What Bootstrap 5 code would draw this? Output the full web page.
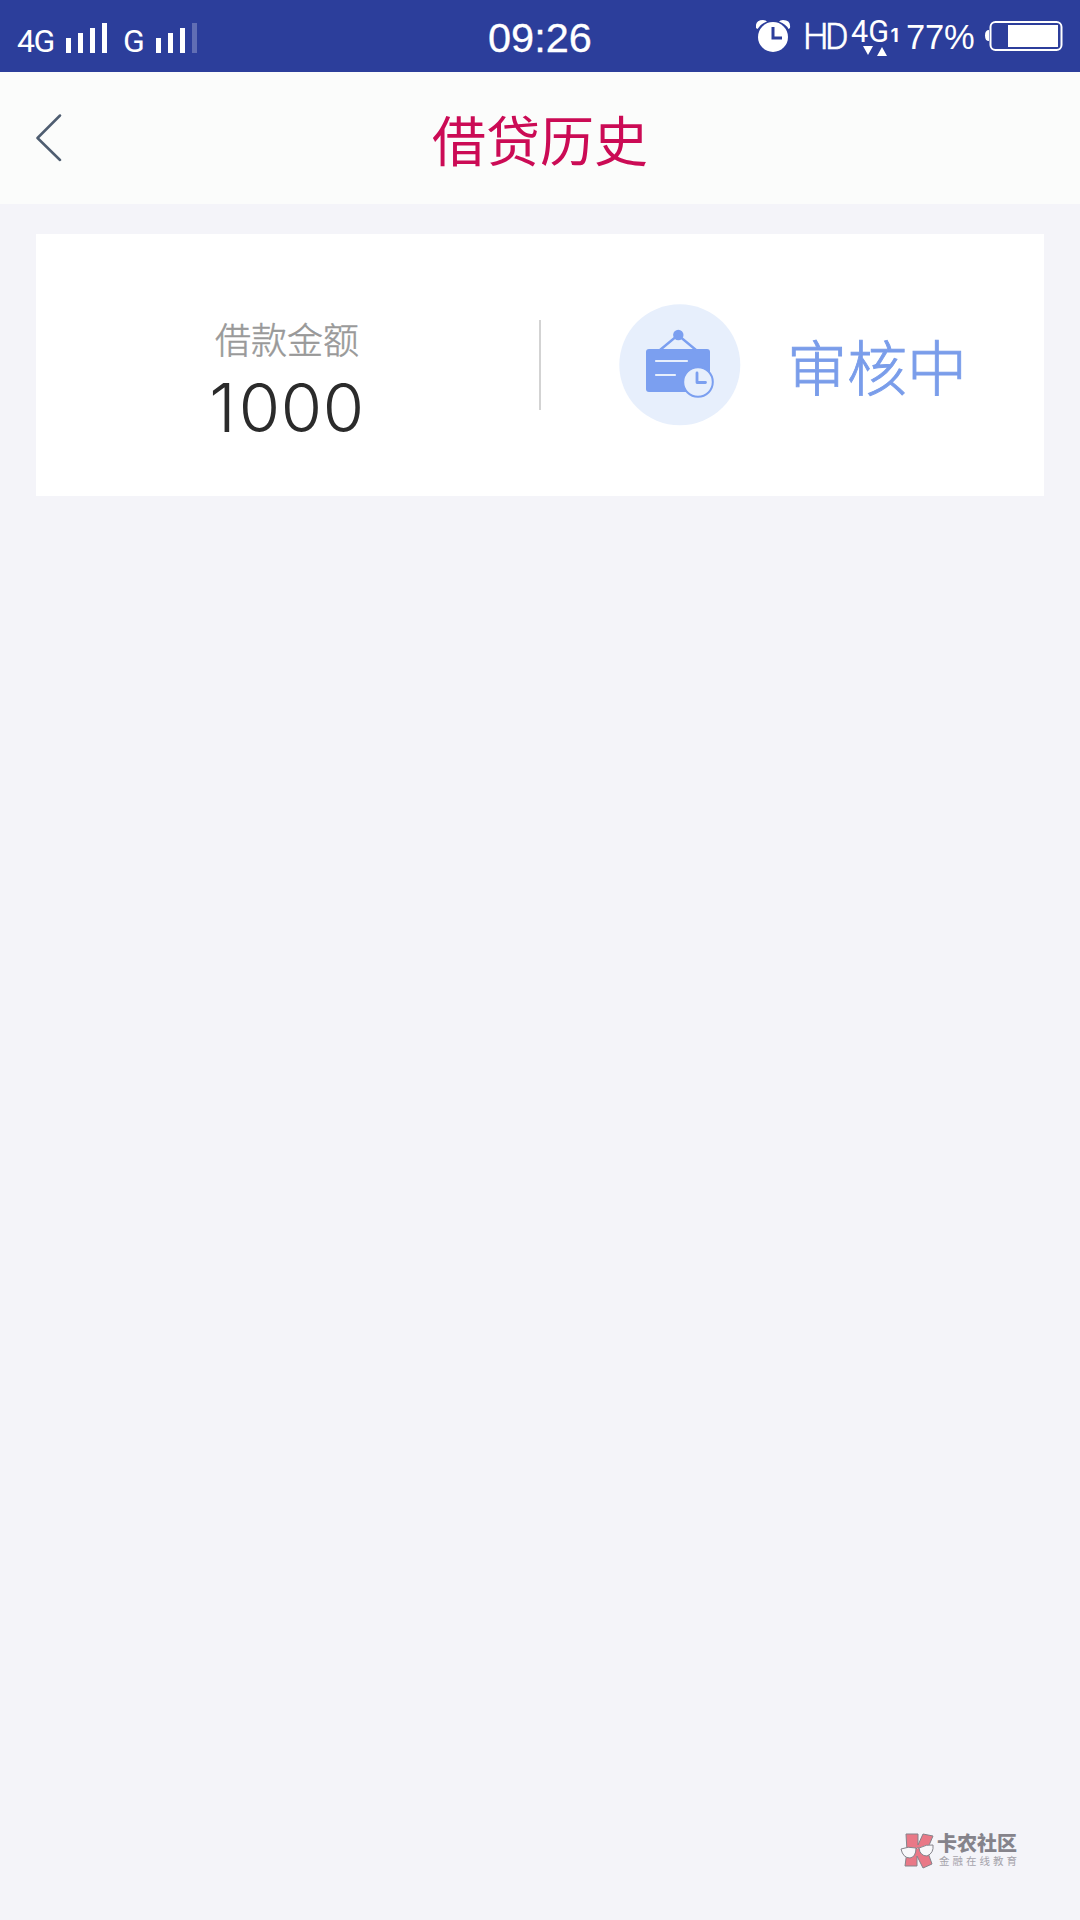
<!DOCTYPE html>
<html lang="zh-CN">
<head>
<meta charset="utf-8">
<meta name="viewport" content="width=device-width, initial-scale=1">
<title>借贷历史</title>
<link href="https://cdn.jsdelivr.net/npm/bootstrap@5.3.0/dist/css/bootstrap.min.css" rel="stylesheet">
<style>
body{background:#f4f4f9;font-family:"Noto Sans CJK SC",sans-serif;min-height:1920px;overflow:hidden}
.status-bar{height:72px;background:#2c3e9b;color:#fff;font-family:Roboto,"Liberation Sans",sans-serif;display:grid;grid-template-columns:488px 1fr 324px;line-height:1}
.status-bar svg{flex:none;display:block}
.net-label{font-size:32px;letter-spacing:-1.5px;margin-top:25px}
.clock{font-family:"Liberation Sans",sans-serif;font-size:41.5px;margin-top:17px;-webkit-text-stroke:.3px #fff}
.hd{font-size:36px;letter-spacing:-3.5px;margin-top:19px;width:47px;font-weight:300;-webkit-text-stroke:.6px #fff}
.pct{font-family:"Liberation Sans",sans-serif;font-size:34.500px;letter-spacing:-.2px;margin-top:20px;width:77px}
.title-bar{height:132px;background:#fbfcfb;padding:0 36px}
.title-bar h1{font-size:54px;line-height:1;color:#cb0b55;font-weight:400;margin:2px 0 0}
.side{width:60px}
.loan{margin:30px 36px 0;height:262px;background:#fff}
.amount-label{font-size:36px;line-height:1;color:#999;font-weight:300;-webkit-text-stroke:.5px #999}
.amount-value{font-family:Inter,sans-serif;font-size:67px;letter-spacing:.6px;line-height:1;color:#2b2b2b;font-weight:300}
.amount-value span{letter-spacing:3px}
.split{width:2px;height:90px;background:#d3d3d3}
.state{font-size:60px;line-height:1;color:#7a9dea;font-weight:300;-webkit-text-stroke:.9px #7a9dea}
.brand{position:absolute;left:899px;top:1831px;color:#85838b}
.brand-name{font-size:20px;line-height:24px;font-weight:900}
.brand-sub{font-size:10.5px;line-height:16px;letter-spacing:3px;color:#a5a3ab;padding-left:2px;margin-top:-2px}
</style>
<script src="https://cdn.jsdelivr.net/npm/bootstrap@5.3.0/dist/js/bootstrap.bundle.min.js"></script>
</head>
<body>
<header class="status-bar">
  <div class="d-flex align-items-start">
    <span class="net-label" style="width:48px;margin-left:17px">4G</span>
    <svg width="58" height="72" fill="#fff"><path d="M1 38h5v15h-5zM13 33h5v20h-5zM25 28h5v25h-5zM37 23h5v30h-5z"/></svg>
    <span class="net-label" style="width:31px">G</span>
    <svg width="44" height="72" fill="#fff"><path d="M2 38h5v15h-5zM14 33h5v20h-5zM26 28h5v25h-5z"/><path d="M38 23h5v30h-5z" opacity=".25"/></svg>
  </div>
  <div><div class="clock">09:26</div></div>
  <div class="d-flex align-items-start">
    <svg width="47" height="72" viewBox="756 0 47 72"><g fill="#fff"><circle cx="773" cy="37" r="15"/><path d="M756 28Q755 20 763 20q3 0 4 1.500Q760 24 757.500 29ZM790 28Q791 20 783 20q-3 0-4 1.500Q786 24 788.500 29Z"/></g><path d="M773 27v11h9" fill="none" stroke="#2c3e9b" stroke-width="3"/></svg>
    <span class="hd">HD</span>
    <svg width="56" height="72" viewBox="850 0 56 72" fill="#fff"><text x="851" y="42" font-size="32" textLength="38" lengthAdjust="spacingAndGlyphs">4G</text><text x="890.500" y="42" font-size="19" font-weight="700" font-family="Inter,sans-serif">1</text><path d="M863 46h10l-5 9zM877 56h10l-5-9z"/></svg>
    <span class="pct">77%</span>
    <svg width="80" height="72" viewBox="983 0 80 72"><rect x="990.500" y="22" width="71" height="28" rx="5" fill="none" stroke="#fff" stroke-width="2"/><path d="M1008 25h50v22h-50zM989 30v11q-4 0-4-5.500t4-5.500z" fill="#fff"/></svg>
  </div>
</header>
<nav class="title-bar d-flex align-items-center justify-content-between">
  <div class="side"><svg class="d-block" width="28" height="50" fill="none" stroke="#4e5d70" stroke-width="2.500" stroke-linecap="round" stroke-linejoin="round"><path d="M24 2.500 1.500 25 24 47"/></svg></div>
  <h1>借贷历史</h1>
  <div class="side"></div>
</nav>
<main class="loan d-flex">
  <section class="d-flex flex-column align-items-center" style="width:502px;padding-top:86px">
    <div class="amount-label">借款金额</div>
    <div class="amount-value" style="margin-top:18px"><span>1</span>000</div>
  </section>
  <div class="split" style="margin:86px 0 0 1px"></div>
  <section class="d-flex align-items-start">
    <svg class="flex-shrink-0" style="margin:70px 0 0 78px" width="122" height="122" viewBox="619 304 122 122"><circle cx="679.800" cy="364.800" r="60.500" fill="#e7effc"/><g fill="#7b9ff0"><rect x="646" y="349" width="64" height="43" rx="3"/><circle cx="678.300" cy="335" r="5.200"/></g><path d="M660 350l18-15 18 15" fill="none" stroke="#7b9ff0" stroke-width="2.400"/><path d="M656 361h31M656 375h19" stroke="#e7effc" stroke-width="2.200" stroke-linecap="round"/><circle cx="698" cy="382" r="14.800" fill="#e7effc" stroke="#7b9ff0" stroke-width="2"/><path d="M697 373v9.500h8.500" fill="none" stroke="#7b9ff0" stroke-width="2.800" stroke-linecap="round" stroke-linejoin="round"/></svg>
    <div class="state text-nowrap" style="margin:101px 0 0 46px">审核中</div>
  </section>
</main>
<aside class="brand d-flex">
  <svg width="38" height="40" viewBox="899 1831 38 40" stroke="#85838b" stroke-width="1"><path d="M906 1834h12v11l5-11 10 2-6 14 5 14-9 4-6-12v10h-12l2-15z" fill="#e97887"/><path d="M901 1849q7-3 15-1 0 9-6 10-7 0-9-9zM919 1848q8-4 14-3 1 8-6 11-7 0-8-8zM916 1849q1-2 3-1" fill="#f8f8fb"/></svg>
  <div class="text-nowrap"><div class="brand-name">卡农社区</div><div class="brand-sub">金融在线教育</div></div>
</aside>
</body>
</html>
